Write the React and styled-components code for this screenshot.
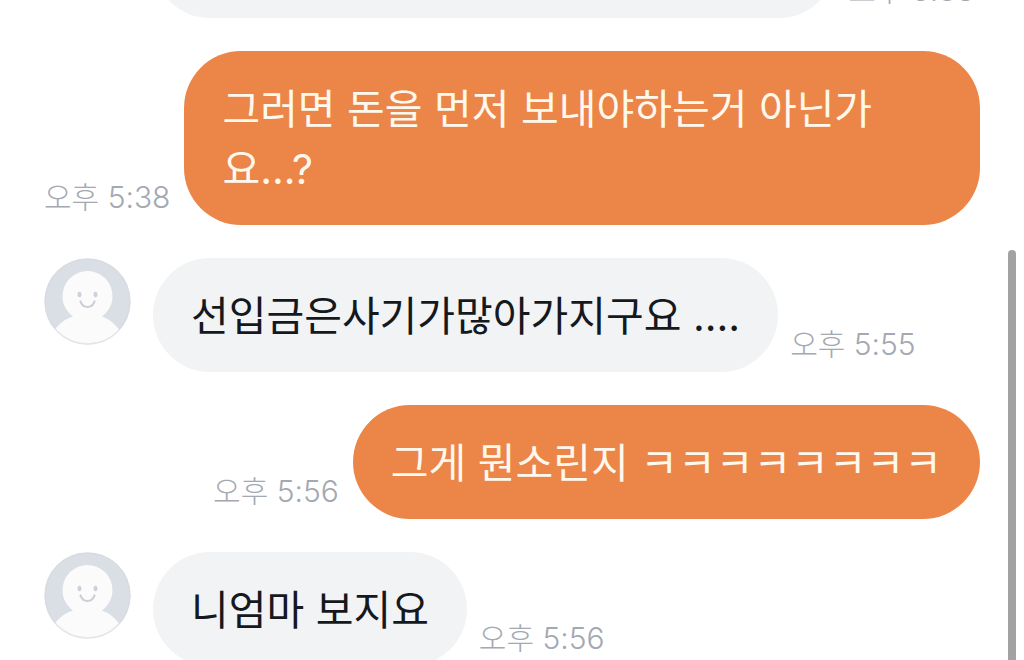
import React from 'react';
import styled, { createGlobalStyle } from 'styled-components';

const GlobalStyle = createGlobalStyle`
  *, *::before, *::after { box-sizing: border-box; }
  body {
    margin: 0;
    background: #fff;
    font-family: Inter, "Noto Sans CJK KR", sans-serif;
  }
`;

const Screen = styled.main`
  position: relative;
  height: 100vh;
  overflow: hidden;
  background: #fff;
`;

const MessageList = styled.ol`
  display: flex;
  flex-direction: column;
  gap: 33px;
  margin: -96px 0 0;
  padding: 0 44px;
  list-style: none;
`;

const Message = styled.li`
  display: flex;
  flex-direction: ${(p) => (p.$own ? 'row-reverse' : 'row')};
  align-items: flex-end;
  gap: ${(p) => (p.$own ? '14px' : '12px')};
`;

const AvatarSlot = styled.div`
  flex: none;
  align-self: flex-start;
  width: 87px;
  height: 87px;
  margin-right: 10px;

  svg { display: block; width: 100%; height: 100%; }
`;

const Bubble = styled.p`
  margin: 0;
  min-width: ${(p) => (p.$wide ? '73%' : '0')};
  max-width: 85%;
  min-height: 114px;
  padding: 28px 38px 26px;
  border-radius: 57px;
  background: ${(p) => (p.$own ? '#ec8548' : '#f1f3f5')};
  color: ${(p) => (p.$own ? '#fff8ec' : '#15181c')};
  font-size: 41px;
  font-weight: 400;
  line-height: 60px;
`;

const Time = styled.time`
  flex: none;
  padding-bottom: 8px;
  color: #a3a8b1;
  font-size: 30px;
  font-weight: 300;
  line-height: 40px;
  white-space: nowrap;
`;

const ScrollThumb = styled.div`
  position: absolute;
  top: 250px;
  right: 8px;
  bottom: -8px;
  width: 8px;
  border-radius: 4px;
  background: #a2a2a2;
`;

function Avatar({ id }) {
  return (
    <AvatarSlot>
      <svg viewBox="0 0 87 87" aria-hidden="true">
        <clipPath id={id}>
          <circle cx="43.5" cy="43.5" r="43" />
        </clipPath>
        <g clipPath={`url(#${id})`}>
          <rect width="87" height="87" fill="#dadee5" />
          <path
            d="M43.5 13a25 25 0 0 1 25 25c0 9-4 15-10.500 20.500c8 3 13 7 19 15.500V87H9V74c6-8.500 11-12.500 20-15.500c-6.500-5.500-10.500-11.500-10.500-20.500a25 25 0 0 1 25-25z"
            fill="#fbfbfc"
          />
        </g>
        <circle cx="43.5" cy="43.5" r="42.5" fill="none" stroke="#d5d8dd" strokeOpacity="0.6" strokeWidth="1.5" />
        <ellipse cx="35.5" cy="36.5" rx="2" ry="2.8" fill="#ccd2da" />
        <ellipse cx="51.5" cy="36.5" rx="2" ry="2.8" fill="#ccd2da" />
        <path d="M36.5 43.5c2.500 7.300 11.500 7.300 14 0" fill="none" stroke="#ccced3" strokeWidth="2.2" strokeLinecap="round" />
      </svg>
    </AvatarSlot>
  );
}

const messages = [
  { id: 'm1', time: '오후 5:38', clock: '17:38', wide: true },
  { id: 'm2', own: true, text: '그러면 돈을 먼저 보내야하는거 아닌가요...?', time: '오후 5:38', clock: '17:38' },
  { id: 'm3', text: '선입금은사기가많아가지구요 ....', time: '오후 5:55', clock: '17:55' },
  { id: 'm4', own: true, text: '그게 뭔소린지 ㅋㅋㅋㅋㅋㅋㅋㅋ', time: '오후 5:56', clock: '17:56' },
  { id: 'm5', text: '니엄마 보지요', time: '오후 5:56', clock: '17:56' },
];

export default function App() {
  return (
    <Screen>
      <GlobalStyle />
      <MessageList>
        {messages.map((m) => (
          <Message key={m.id} $own={m.own}>
            {!m.own && <Avatar id={`avatar-${m.id}`} />}
            <Bubble $own={m.own} $wide={m.wide}>{m.text}</Bubble>
            <Time dateTime={m.clock}>{m.time}</Time>
          </Message>
        ))}
      </MessageList>
      <ScrollThumb />
    </Screen>
  );
}
